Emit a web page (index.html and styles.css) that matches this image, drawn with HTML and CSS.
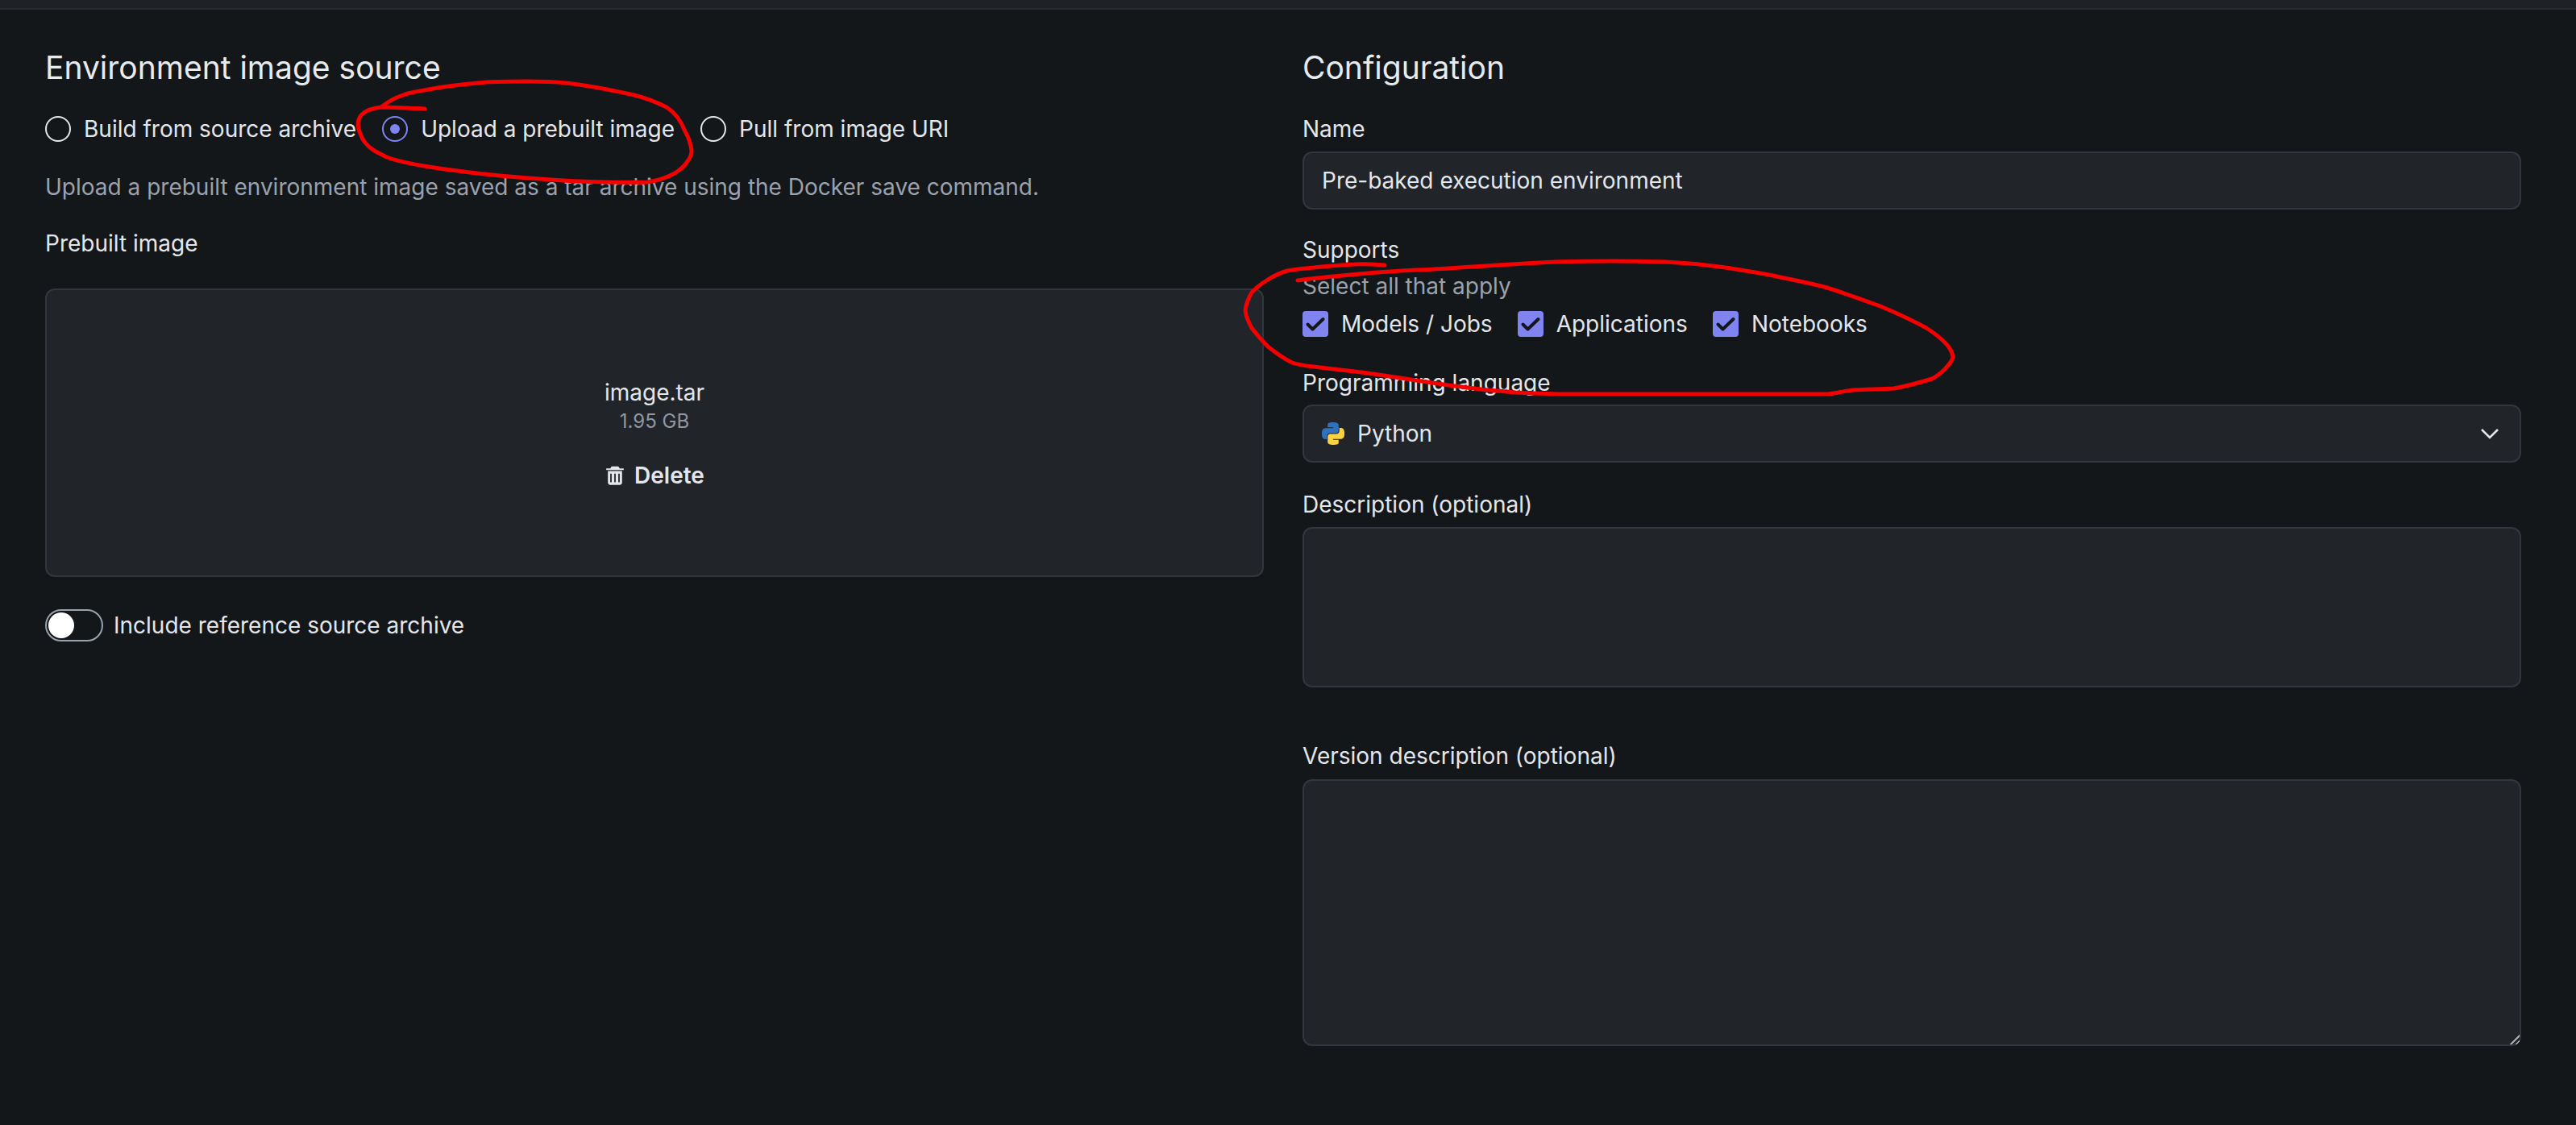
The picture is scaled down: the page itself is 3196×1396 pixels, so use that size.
FILE: index.html
```html
<!DOCTYPE html>
<html lang="en">
<head>
<meta charset="utf-8">
<title>Environment</title>
<link rel="stylesheet" href="styles.css">
</head>
<body>
<div class="topbar"></div>
<main class="columns">
  <section class="col">
    <h2 class="heading">Environment image source</h2>
    <div class="radios">
      <label class="option"><span class="radio"></span>Build from source archive</label>
      <label class="option"><span class="radio on"></span>Upload a prebuilt image</label>
      <label class="option"><span class="radio"></span>Pull from image URI</label>
    </div>
    <p class="hint">Upload a prebuilt environment image saved as a tar archive using the Docker save command.</p>
    <div class="label prebuilt">Prebuilt image</div>
    <div class="dropzone">
      <div class="filename">image.tar</div>
      <div class="filesize">1.95 GB</div>
      <button class="delete" type="button">
        <svg class="trash" viewBox="0 0 22 24" aria-hidden="true">
          <path d="M7.6 0.8h6.8c.8 0 1.4.4 1.7 1.1l.6 1.3H21c.6 0 1 .4 1 1s-.4 1-1 1H1c-.6 0-1-.4-1-1s.4-1 1-1h4.3l.6-1.3C6.2 1.2 6.8.8 7.6.8z"/>
          <path fill-rule="evenodd" d="M2.2 6.6h17.6v14.2c0 1.6-1.3 2.9-2.9 2.9H5.1c-1.6 0-2.9-1.3-2.9-2.9V6.6zM6 9.4c-.5 0-.9.4-.9.9v9.4c0 .5.4.9.9.9s.9-.4.9-.9v-9.4c0-.5-.4-.9-.9-.9zm5 0c-.5 0-.9.4-.9.9v9.4c0 .5.4.9.9.9s.9-.4.9-.9v-9.4c0-.5-.4-.9-.9-.9zm5 0c-.5 0-.9.4-.9.9v9.4c0 .5.4.9.9.9s.9-.4.9-.9v-9.4c0-.5-.4-.9-.9-.9z"/>
        </svg>
        Delete
      </button>
    </div>
    <label class="switch-row"><span class="switch"><span class="knob"></span></span>Include reference source archive</label>
  </section>

  <section class="col">
    <h2 class="heading">Configuration</h2>
    <div class="label name-label">Name</div>
    <input class="control" type="text" value="Pre-baked execution environment">
    <div class="label supports-label">Supports</div>
    <div class="hint-small">Select all that apply</div>
    <div class="checks">
      <label class="option"><span class="check"><svg viewBox="0 0 32 32" aria-hidden="true"><path d="M6.5 16.5l6 6L25.5 10"/></svg></span>Models / Jobs</label>
      <label class="option"><span class="check"><svg viewBox="0 0 32 32" aria-hidden="true"><path d="M6.5 16.5l6 6L25.5 10"/></svg></span>Applications</label>
      <label class="option"><span class="check"><svg viewBox="0 0 32 32" aria-hidden="true"><path d="M6.5 16.5l6 6L25.5 10"/></svg></span>Notebooks</label>
    </div>
    <div class="label lang-label">Programming language</div>
    <div class="control select">
      <svg class="python" viewBox="0 0 24 24" aria-hidden="true">
        <path class="py-blue" d="M14.25.18l.9.2.73.26.59.3.45.32.34.34.25.34.16.33.1.3.04.26.02.2-.01.13V8.5l-.05.63-.13.55-.21.46-.26.38-.3.31-.33.25-.35.19-.35.14-.33.1-.3.07-.26.04-.21.02H8.77l-.69.05-.59.14-.5.22-.41.27-.33.32-.27.35-.2.36-.15.37-.1.35-.07.32-.04.27-.02.21v3.06H3.17l-.21-.03-.28-.07-.32-.12-.35-.18-.36-.26-.36-.36-.35-.46-.32-.59-.28-.73-.21-.88-.14-1.05-.05-1.23.06-1.22.16-1.04.24-.87.32-.71.36-.57.4-.44.42-.33.42-.24.4-.16.36-.1.32-.05.24-.01h.16l.06.01h8.16v-.83H6.18l-.01-2.75-.02-.37.05-.34.11-.31.17-.28.25-.26.31-.23.38-.2.44-.18.51-.15.58-.12.64-.1.71-.06.77-.04.84-.02 1.27.05z"/>
        <path class="py-yellow" d="M21.04 6.11l.28.06.32.12.35.18.36.27.36.35.35.47.32.59.28.73.21.88.14 1.04.05 1.23-.06 1.23-.16 1.04-.24.86-.32.71-.36.57-.4.45-.42.33-.42.24-.4.16-.36.09-.32.05-.24.02-.16-.01h-8.22v.82h5.84l.01 2.76.02.36-.05.34-.11.31-.17.29-.25.25-.31.24-.38.2-.44.17-.51.15-.58.13-.64.09-.71.07-.77.04-.84.01-1.27-.04-1.07-.14-.9-.2-.73-.25-.59-.3-.45-.33-.34-.34-.25-.34-.16-.33-.1-.3-.04-.25-.02-.2.01-.13v-5.34l.05-.64.13-.54.21-.46.26-.38.3-.32.33-.24.35-.2.35-.14.33-.1.3-.06.26-.04.21-.02.13-.01h5.84l.69-.05.59-.14.5-.21.41-.28.33-.32.27-.35.2-.36.15-.36.1-.35.07-.32.04-.28.02-.21V6.07h2.09l.14.01z"/>
      </svg>
      <span class="select-value">Python</span>
      <svg class="chevron" viewBox="0 0 22 14" aria-hidden="true"><path d="M1 2l10 10L21 2"/></svg>
    </div>
    <div class="label desc-label">Description (optional)</div>
    <textarea class="control area area-short"></textarea>
    <div class="label version-label">Version description (optional)</div>
    <textarea class="control area area-tall"></textarea>
  </section>
</main>
<svg class="ink" viewBox="0 0 3196 1396" aria-hidden="true">
  <path d="M527 135C505 134 485 133 473 133C463 134 453 137 448 143C443 149 444 154 445 160C447 167 449 172 453 177C460 186 470 190 480 195C492 200 505 202 520 205C555 211 590 215 620 218C655 221 690 224 720 225C750 226 780 227 803 226C818 224 828 220 837 215C845 210 850 205 853 200C857 195 858 191 858 187C857 178 854 170 850 163C845 150 838 140 827 133C815 127 803 122 787 118C760 112 730 106 703 103C685 101 670 101 653 101C635 101 620 101 603 102C580 104 558 106 537 110C522 113 510 114 500 118C488 122 480 127 473 133"/>
  <path d="M1718 329C1705 328 1692 327 1680 328C1662 329 1646 330 1630 332C1618 333 1607 334 1597 336C1587 339 1581 342 1573 347C1565 352 1558 357 1553 363C1548 371 1546 378 1545 385C1546 393 1549 400 1553 407C1559 415 1566 423 1573 430C1583 438 1593 445 1603 450C1612 453 1620 454 1630 455C1652 458 1675 460 1697 463C1730 468 1765 473 1797 478C1825 482 1853 485 1880 487C1902 488 1925 489 1947 489H2267C2278 488 2289 485 2300 484C2317 483 2334 483 2350 482C2366 479 2381 475 2397 470C2403 467 2408 463 2413 458C2417 453 2422 449 2423 443C2422 436 2418 430 2413 425C2406 418 2398 412 2390 407C2372 397 2352 388 2333 380C2311 372 2289 364 2267 357C2245 351 2222 347 2200 342C2178 338 2156 334 2133 331C2111 328 2089 326 2067 325C2045 324 2022 324 2000 324C1977 324 1953 324 1930 325C1887 327 1842 330 1797 333C1764 335 1730 336 1697 339C1667 342 1638 344 1610 348"/>
</svg>
</body>
</html>
```

FILE: styles.css
```css
* {
  box-sizing: border-box;
}

html,
body {
  margin: 0;
  height: 100%;
}

body {
  position: relative;
  overflow: hidden;
  background: #14171a;
  color: #e3e6ea;
  font-family: Inter, "Liberation Sans", sans-serif;
  font-size: 28px;
  line-height: 40px;
}

.topbar {
  height: 12px;
  background: #1e2126;
  border-bottom: 2px solid #282c32;
}

.columns {
  display: grid;
  grid-template-columns: 1512px 1512px;
  column-gap: 48px;
  padding: 44px 68px 0 56px;
}

.col {
  min-width: 0;
}

.heading {
  margin: 0;
  font-size: 39px;
  font-weight: 400;
  line-height: 56px;
  color: #e8ebee;
}

.radios {
  display: flex;
  gap: 32px;
  margin-top: 32px;
}

.option,
.switch-row {
  display: flex;
  align-items: center;
  height: 32px;
  white-space: nowrap;
}

.radio {
  flex: none;
  position: relative;
  width: 32px;
  height: 32px;
  margin-right: 16px;
  border: 2px solid #e3e6ea;
  border-radius: 50%;
}

.radio.on {
  border-color: #7f84f1;
}

.radio.on::after {
  content: "";
  position: absolute;
  top: 8px;
  left: 8px;
  width: 12px;
  height: 12px;
  border-radius: 50%;
  background: #7f84f1;
}

.hint {
  margin: 36px 0 0;
  color: #9aa2ad;
}

.label {
  height: 40px;
}

.prebuilt {
  margin-top: 30px;
}

.dropzone {
  display: flex;
  flex-direction: column;
  align-items: center;
  height: 358px;
  margin-top: 36px;
  padding-top: 107px;
  background: #212429;
  border: 2px solid #32363e;
  border-radius: 12px;
}

.filename {
  line-height: 40px;
}

.filesize {
  margin-top: -2px;
  font-size: 24px;
  line-height: 36px;
  color: #8f97a3;
}

.delete {
  display: flex;
  align-items: center;
  gap: 13px;
  margin: 29px 0 0 2px;
  padding: 0;
  border: 0;
  background: none;
  color: #e3e6ea;
  font: 600 28px/40px Inter, "Liberation Sans", sans-serif;
}

.trash {
  width: 22px;
  height: 24px;
  fill: currentColor;
}

.switch-row {
  height: 40px;
  margin-top: 40px;
}

.switch {
  flex: none;
  display: flex;
  align-items: center;
  width: 72px;
  height: 40px;
  margin-right: 13px;
  padding-left: 2px;
  border: 2px solid #9aa2ad;
  border-radius: 20px;
  background: #14171a;
}

.knob {
  width: 32px;
  height: 32px;
  border-radius: 50%;
  background: #fff;
}

.name-label {
  margin-top: 28px;
}

.control {
  display: flex;
  align-items: center;
  width: 100%;
  height: 72px;
  margin: 8px 0 0;
  padding: 0 22px;
  background: #212429;
  border: 2px solid #32363e;
  border-radius: 12px;
  color: #e3e6ea;
  font: 400 28px/40px Inter, "Liberation Sans", sans-serif;
  outline: none;
}

.supports-label {
  margin-top: 30px;
}

.hint-small {
  margin-top: 8px;
  line-height: 34px;
  color: #9aa2ad;
}

.checks {
  display: flex;
  gap: 31px;
  margin-top: 14px;
}

.check {
  flex: none;
  width: 32px;
  height: 32px;
  margin-right: 16px;
  border-radius: 4px;
  background: #7f84f1;
}

.check svg {
  display: block;
  width: 32px;
  height: 32px;
  fill: none;
  stroke: #14171a;
  stroke-width: 4;
  stroke-linecap: round;
  stroke-linejoin: round;
}

.lang-label {
  margin-top: 37px;
}

.select {
  margin-top: 7px;
}

.python {
  flex: none;
  width: 28px;
  height: 28px;
  margin-right: 16px;
}

.py-blue {
  fill: #2f71bd;
}

.py-yellow {
  fill: #fdd23f;
}

.select-value {
  flex: 1;
}

.chevron {
  flex: none;
  width: 22px;
  height: 14px;
  margin-right: 4px;
  fill: none;
  stroke: #e3e6ea;
  stroke-width: 2.6;
}

.desc-label {
  margin-top: 32px;
}

.area {
  display: block;
  padding: 16px 22px;
  margin-top: 8px;
}

.area-short {
  height: 199px;
  resize: none;
}

.area-tall {
  height: 331px;
  margin-top: 9px;
  resize: vertical;
}

.area-tall::-webkit-resizer {
  background: linear-gradient(135deg, transparent 60%, #a9abae 60%, #a9abae 67%, transparent 67%, transparent 82%, #a9abae 82%, #a9abae 89%, transparent 89%);
}

.version-label {
  margin-top: 65px;
}

.ink {
  position: absolute;
  top: 0;
  left: 0;
  width: 3196px;
  height: 1396px;
  pointer-events: none;
  fill: none;
  stroke: #f40000;
  stroke-width: 5;
  stroke-linecap: round;
  stroke-linejoin: round;
}
```
